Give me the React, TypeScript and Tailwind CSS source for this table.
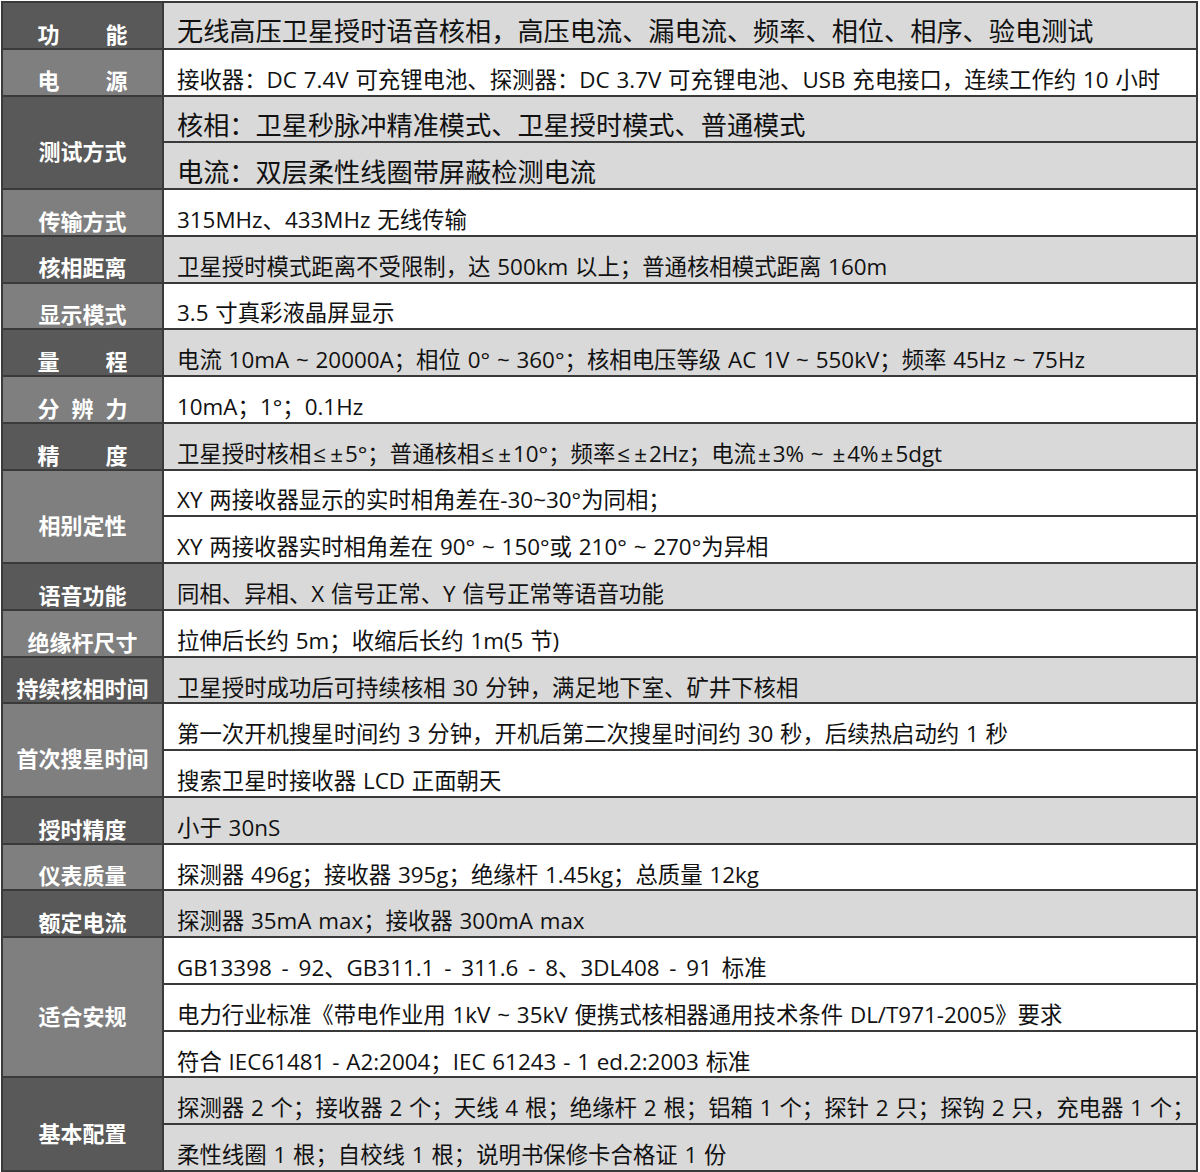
import React from "react";

type Row = {
  label: string;
  values: string[];
  spread?: boolean;
  big?: boolean;
};

const T = " ~ ";

const rows: Row[] = [
  { label: "功能", spread: true, big: true, values: ["无线高压卫星授时语音核相，高压电流、漏电流、频率、相位、相序、验电测试"] },
  { label: "电源", spread: true, values: ["接收器：DC 7.4V 可充锂电池、探测器：DC 3.7V 可充锂电池、USB 充电接口，连续工作约 10 小时"] },
  { label: "测试方式", big: true, values: ["核相：卫星秒脉冲精准模式、卫星授时模式、普通模式", "电流：双层柔性线圈带屏蔽检测电流"] },
  { label: "传输方式", values: ["315MHz、433MHz 无线传输"] },
  { label: "核相距离", values: ["卫星授时模式距离不受限制，达 500km 以上；普通核相模式距离 160m"] },
  { label: "显示模式", values: ["3.5 寸真彩液晶屏显示"] },
  { label: "量程", spread: true, values: [`电流 10mA${T}20000A；相位 0°${T}360°；核相电压等级 AC 1V${T}550kV；频率 45Hz${T}75Hz`] },
  { label: "分辨力", spread: true, values: ["10mA；1°；0.1Hz"] },
  { label: "精度", spread: true, values: [`卫星授时核相≤±5°；普通核相≤±10°；频率≤±2Hz；电流±3%${T}±4%±5dgt`] },
  { label: "相别定性", values: ["XY 两接收器显示的实时相角差在-30~30°为同相；", `XY 两接收器实时相角差在 90°${T}150°或 210°${T}270°为异相`] },
  { label: "语音功能", values: ["同相、异相、X 信号正常、Y 信号正常等语音功能"] },
  { label: "绝缘杆尺寸", values: ["拉伸后长约 5m；收缩后长约 1m(5 节)"] },
  { label: "持续核相时间", values: ["卫星授时成功后可持续核相 30 分钟，满足地下室、矿井下核相"] },
  { label: "首次搜星时间", values: ["第一次开机搜星时间约 3 分钟，开机后第二次搜星时间约 30 秒，后续热启动约 1 秒", "搜索卫星时接收器 LCD 正面朝天"] },
  { label: "授时精度", values: ["小于 30nS"] },
  { label: "仪表质量", values: ["探测器 496g；接收器 395g；绝缘杆 1.45kg；总质量 12kg"] },
  { label: "额定电流", values: ["探测器 35mA max；接收器 300mA max"] },
  { label: "适合安规", values: ["GB13398 - 92、GB311.1 - 311.6 - 8、3DL408 - 91 标准", `电力行业标准《带电作业用 1kV${T}35kV 便携式核相器通用技术条件 DL/T971-2005》要求`, "符合 IEC61481 - A2:2004；IEC 61243 - 1 ed.2:2003 标准"] },
  { label: "基本配置", values: ["探测器 2 个；接收器 2 个；天线 4 根；绝缘杆 2 根；铝箱 1 个；探针 2 只；探钩 2 只，充电器 1 个；", "柔性线圈 1 根；自校线 1 根；说明书保修卡合格证 1 份"] },
];

const spanClass: Record<number, string> = {
  1: "row-span-1",
  2: "row-span-2",
  3: "row-span-3",
};

// ≤ and ± sit a bit wider in the sheet
function Value({ text }: { text: string }) {
  const parts = text.split(/([≤±])/);
  return (
    <>
      {parts.map((p, i) =>
        p === "≤" || p === "±" ? (
          <span key={i} className="px-[2px]">
            {p}
          </span>
        ) : (
          <React.Fragment key={i}>{p}</React.Fragment>
        )
      )}
    </>
  );
}

export default function App() {
  return (
    <div className="w-[1200px] h-[1172px] bg-white pl-[1px] pt-[1px] font-['Open_Sans','Noto_Sans_CJK_SC',sans-serif]">
      <div className="w-[1197px] h-[1171px] bg-[#3a3a3a] p-[2px] grid grid-cols-[159px_1fr] grid-rows-[repeat(25,minmax(0,1fr))] gap-[2px]">
        {rows.map((row, i) => {
          const dark = i % 2 === 0;
          return (
            <React.Fragment key={row.label}>
              <div
                className={`col-start-1 ${spanClass[row.values.length]} flex items-center justify-center pt-[17px] ${
                  dark ? "bg-[#595959]" : "bg-[#7f7f7f]"
                }`}
              >
                {row.spread ? (
                  <div className="w-[90px] flex justify-between text-white font-bold text-[22px] leading-[1.2]">
                    {row.label.split("").map((c) => (
                      <span key={c}>{c}</span>
                    ))}
                  </div>
                ) : (
                  <span className="text-white font-bold text-[22px] leading-[1.2]">{row.label}</span>
                )}
              </div>
              {row.values.map((v) => (
                <div
                  key={v}
                  className={`col-start-2 flex items-end pl-[13px] text-[#111] whitespace-nowrap leading-[1.2] ${
                    row.big ? "text-[26.2px] pb-0" : "text-[22.4px] pb-[1px]"
                  } ${v.startsWith("GB13398") ? "[word-spacing:4px]" : "[word-spacing:1px]"} ${
                    dark ? "bg-[#d9d9d9]" : "bg-white"
                  }`}
                >
                  <span>
                    <Value text={v} />
                  </span>
                </div>
              ))}
            </React.Fragment>
          );
        })}
      </div>
    </div>
  );
}
